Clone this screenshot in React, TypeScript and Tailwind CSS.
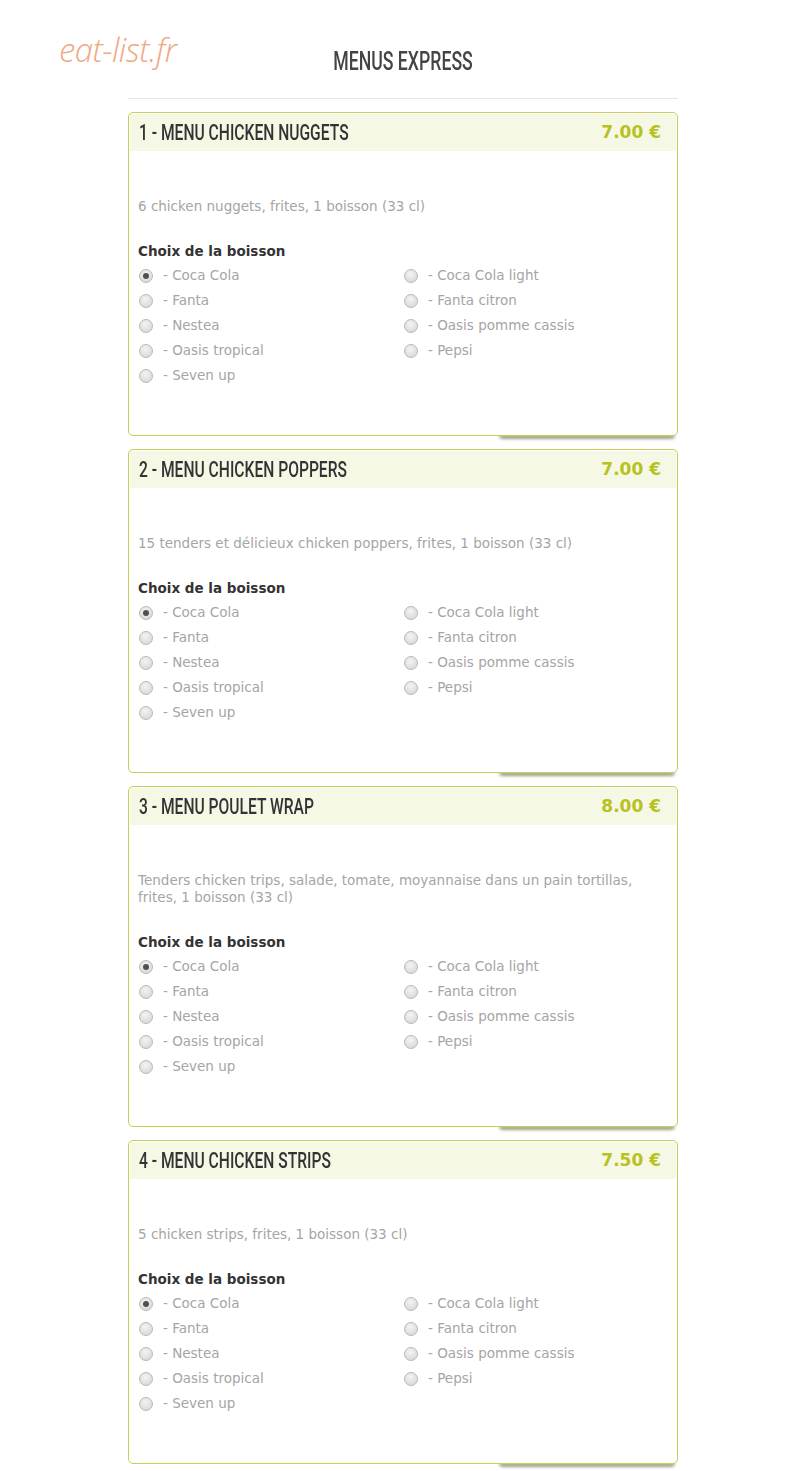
const drinks: [string, string][] = [
  ["Coca Cola", "Coca Cola light"],
  ["Fanta", "Fanta citron"],
  ["Nestea", "Oasis pomme cassis"],
  ["Oasis tropical", "Pepsi"],
  ["Seven up", ""],
];

interface Menu {
  title: string;
  price: string;
  description: string;
}

const menus: Menu[] = [
  { title: "1 - MENU CHICKEN NUGGETS", price: "7.00 €", description: "6 chicken nuggets, frites, 1 boisson (33 cl)" },
  { title: "2 - MENU CHICKEN POPPERS", price: "7.00 €", description: "15 tenders et délicieux chicken poppers, frites, 1 boisson (33 cl)" },
  {
    title: "3 - MENU POULET WRAP",
    price: "8.00 €",
    description: "Tenders chicken trips, salade, tomate, moyannaise dans un pain tortillas, frites, 1 boisson (33 cl)",
  },
  { title: "4 - MENU CHICKEN STRIPS", price: "7.50 €", description: "5 chicken strips, frites, 1 boisson (33 cl)" },
];

const condensed = "font-['Roboto',sans-serif] font-medium";
const body = "font-['DejaVu_Sans','Noto_Sans',sans-serif]";

function Radio({ checked }: { checked?: boolean }) {
  return (
    <span className="w-[14px] h-[14px] rounded-full border border-[#b9b9b9] bg-[radial-gradient(circle_at_45%_35%,#f4f4f4,#d2d2d2)] flex items-center justify-center shrink-0">
      {checked && <span className="w-[6px] h-[6px] rounded-full bg-[#505050]" />}
    </span>
  );
}

function Option({ label, checked }: { label: string; checked?: boolean }) {
  if (!label) return <div />;
  return (
    <label className="flex items-center gap-[10px] h-[25px] pl-[1px]">
      <Radio checked={checked} />
      <span className="text-[#a5a5a5]">- {label}</span>
    </label>
  );
}

function MenuCard({ menu }: { menu: Menu }) {
  return (
    <div className="relative">
      <div className="relative z-10 border border-[#c9cd55] rounded-[5px] bg-white pb-[47px]">
        <div className="mx-[1px] mt-[1px] h-[37px] bg-[#f6f8e6] flex items-center justify-between pl-[9px] pr-[15px]">
          <h2 className={`${condensed} text-[22px] text-[#333] scale-x-[0.71] origin-left whitespace-nowrap`}>{menu.title}</h2>
          <span className={`${body} text-[17px] font-bold text-[#b7c220]`}>{menu.price}</span>
        </div>
        <div className={`${body} px-[9px] text-[13.5px]`}>
          <p className="mt-[47px] text-[#a5a5a5] leading-[17px] pr-[20px]">{menu.description}</p>
          <p className="mt-[27px] text-[#333] font-semibold leading-[18px]">Choix de la boisson</p>
          <div className="grid grid-cols-2 mt-[3px]">
            {drinks.map(([a, b], i) => (
              <div key={a} className="contents">
                <Option label={a} checked={i === 0} />
                <Option label={b} />
              </div>
            ))}
          </div>
        </div>
      </div>
      {/* lifted shadow under the lower right corner */}
      <div className="absolute -bottom-[3px] right-[3px] w-[176px] h-[4px] bg-[#5f6430] opacity-60 blur-[1.5px] rounded-b-sm" />
    </div>
  );
}

export default function App() {
  return (
    <div className="w-[800px] min-h-[1471px] bg-white relative">
      <div className="absolute left-[59px] top-[33px] font-['Open_Sans',sans-serif] italic font-light text-[33px] text-[#eea882] leading-none tracking-[-0.6px]">
        eat-list.fr
      </div>
      <div className="w-[550px] ml-[128px] pt-[46px]">
        <h1 className={`${condensed} text-center text-[26px] text-[#444] leading-[30px] scale-x-[0.68]`}>MENUS EXPRESS</h1>
        <div className="mt-[22px] h-px bg-[#e6e6e6]" />
        <div className="mt-[13px] flex flex-col gap-[13px]">
          {menus.map((m) => (
            <MenuCard key={m.title} menu={m} />
          ))}
        </div>
      </div>
    </div>
  );
}
